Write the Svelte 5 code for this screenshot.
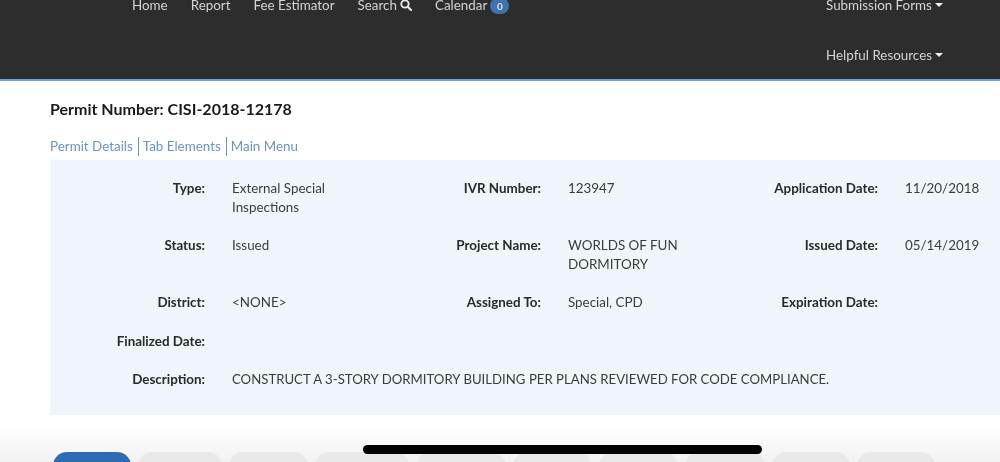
<script>
  const leftNav = [
    { label: 'Home' },
    { label: 'Report' },
    { label: 'Fee Estimator' },
    { label: 'Search', icon: true },
    { label: 'Calendar', badge: '0' }
  ];
  const tabs = [78, 84, 79, 94, 90, 79, 79, 80, 78, 78];
  const rows = [
    ['Type:', 'External Special Inspections', 'IVR Number:', '123947', 'Application Date:', '11/20/2018'],
    ['Status:', 'Issued', 'Project Name:', 'WORLDS OF FUN DORMITORY', 'Issued Date:', '05/14/2019'],
    ['District:', '<NONE>', 'Assigned To:', 'Special, CPD', 'Expiration Date:', ''],
  ];
</script>

<div class="page">
  <header class="topbar">
    <nav class="main-nav">
      {#each leftNav as item}
        <a href="#top" class="nav-link">
          <span>{item.label}</span>
          {#if item.icon}
            <svg class="search" viewBox="0 0 14 14" aria-hidden="true">
              <circle cx="5.8" cy="5.8" r="4.3" fill="none" stroke="currentColor" stroke-width="2.2" />
              <path d="M9 9l3.8 3.8" stroke="currentColor" stroke-width="2.6" stroke-linecap="round" />
            </svg>
          {/if}
          {#if item.badge}<span class="badge">{item.badge}</span>{/if}
        </a>
      {/each}
    </nav>
    <nav class="side-nav">
      <a href="#top" class="nav-link"><span>Submission Forms</span><i class="caret"></i></a>
      <a href="#top" class="nav-link"><span>Helpful Resources</span><i class="caret"></i></a>
    </nav>
  </header>

  <main class="content">
    <h1>Permit Number: CISI-2018-12178</h1>
    <div class="crumbs">
      <a href="#top">Permit Details</a>
      <a href="#top">Tab Elements</a>
      <a href="#top">Main Menu</a>
    </div>
    <section class="panel">
      {#each rows as r}
        {#each r as cell, i}
          <div class={i % 2 ? 'val' : 'lab'}>{cell}</div>
        {/each}
      {/each}
      <div class="lab late">Finalized Date:</div>
      <div class="val wide late"></div>
      <div class="lab late">Description:</div>
      <div class="val wide desc late">CONSTRUCT A 3-STORY DORMITORY BUILDING PER PLANS REVIEWED FOR CODE COMPLIANCE.</div>
    </section>
    <div class="tabs">
      {#each tabs as w, i}
        <div class="tab" class:active={i === 0} style="width: {w}px"></div>
      {/each}
    </div>
  </main>
  <div class="home-indicator"></div>
</div>

<style>
  :global(body) {
    margin: 0;
    background: #fff;
  }
  .page {
    position: relative;
    width: 1000px;
    height: 462px;
    overflow: hidden;
    font-family: Lato, "Liberation Sans", sans-serif;
    font-size: 13.4px;
    background: linear-gradient(#fff 0, #fff 425px, #f2f2f2 462px);
  }
  .topbar {
    box-sizing: border-box;
    height: 81px;
    background: #2d2d2d;
    border-bottom: 2px solid #6aa3dc;
    display: flex;
    justify-content: space-between;
    color: #d4d4d4;
    filter: blur(0.45px);
  }
  .main-nav {
    display: flex;
    gap: 23px;
    margin: -4px 0 0 132px;
    height: 18px;
    align-items: center;
  }
  .side-nav {
    display: flex;
    flex-direction: column;
    gap: 32px;
    width: 116px;
    margin: -4px 58px 0 0;
  }
  .nav-link {
    color: inherit;
    text-decoration: none;
    line-height: 18px;
    white-space: nowrap;
    display: flex;
    align-items: center;
  }
  .search {
    flex: none;
    width: 12px;
    height: 12px;
    margin-left: 3px;
    color: #e8e8e8;
  }
  .badge {
    flex: none;
    width: 19px;
    height: 16px;
    margin-left: 3px;
    margin-top: 2px;
    border-radius: 8px;
    background: #3f72ae;
    color: #dfe8f3;
    font-size: 10px;
    font-weight: 700;
    line-height: 16px;
    text-align: center;
  }
  .caret {
    flex: none;
    width: 0;
    height: 0;
    margin-left: 3px;
    border-left: 4px solid transparent;
    border-right: 4px solid transparent;
    border-top: 4px solid #f0f0f0;
  }
  .content {
    padding-left: 50px;
    filter: blur(0.45px);
  }
  h1 {
    margin: 18px 0 0;
    font-size: 16px;
    font-weight: 700;
    line-height: 20px;
    color: #1b1b1b;
  }
  .crumbs {
    display: flex;
    margin-top: 18px;
    height: 19px;
    line-height: 19px;
    gap: 5px;
  }
  .crumbs a {
    color: #6a93c9;
    text-decoration: none;
  }
  .crumbs a + a {
    border-left: 1px solid #6a93c9;
    padding-left: 4px;
  }
  .panel {
    box-sizing: border-box;
    height: 255px;
    margin-top: 4px;
    padding: 19px 0 0;
    background: #f0f5fc;
    display: grid;
    grid-template-columns: 155px 110px 172px 110px 173px 1fr;
    column-gap: 27px;
    row-gap: 19px;
    grid-auto-rows: min-content;
    align-content: start;
    line-height: 19px;
  }
  .lab {
    text-align: right;
    font-weight: 700;
    color: #2a2a2a;
  }
  .val {
    color: #3c3c3c;
  }
  .wide {
    grid-column: 2 / -1;
  }
  .late {
    position: relative;
    top: 1px;
  }
  .desc {
    font-size: 13.2px;
  }
  .tabs {
    display: flex;
    gap: 7px;
    margin: 37px 0 0 3px;
  }
  .tab {
    flex: none;
    height: 40px;
    border-radius: 14px 14px 0 0;
    background: #e9e9e9;
  }
  .tab.active {
    background: #2f6bb4;
  }
  .home-indicator {
    position: absolute;
    left: 363px;
    top: 445px;
    width: 399px;
    height: 9px;
    border-radius: 5px;
    background: #000;
  }
</style>
